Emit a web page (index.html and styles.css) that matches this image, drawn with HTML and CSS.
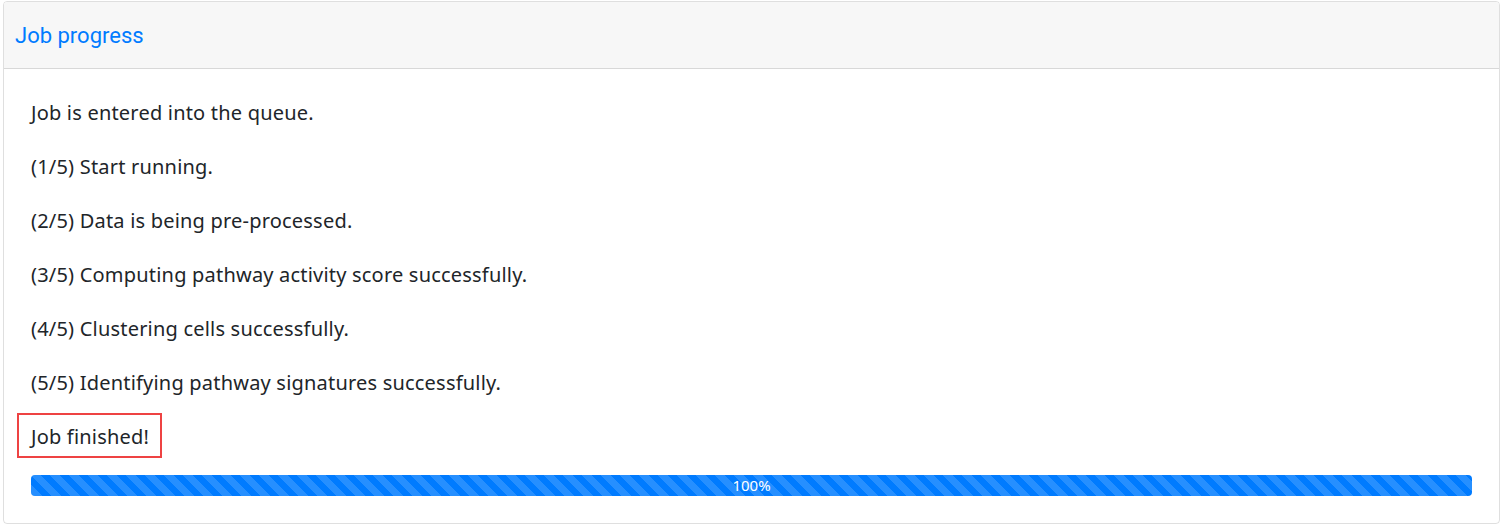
FILE: index.html
```html
<!DOCTYPE html>
<html lang="en">
<head>
    <meta charset="UTF-8">
    <title>Job progress</title>
    <link rel="stylesheet" href="styles.css">
</head>
<body>
    <div class="card">
        <div class="card-header">Job progress</div>
        <div class="card-body">
            <p>Job is entered into the queue.</p>
            <p>(1/5) Start running.</p>
            <p>(2/5) Data is being pre-processed.</p>
            <p>(3/5) Computing pathway activity score successfully.</p>
            <p>(4/5) Clustering cells successfully.</p>
            <p>(5/5) Identifying pathway signatures successfully.</p>
            <p><span class="finished">Job finished!</span></p>
            <div class="progress">
                <div class="progress-bar" style="width: 100%">100%</div>
            </div>
        </div>
    </div>
</body>
</html>
```

FILE: styles.css
```css
* {
    margin: 0;
    padding: 0;
    box-sizing: border-box;
}

body {
    margin: 1px 6px 0 3px;
    font-family: 'Noto Sans', 'Open Sans', sans-serif;
    color: #212529;
    background: #fff;
}

.card {
    border: 1px solid rgba(0,0,0,0.125);
    border-radius: 4px;
    overflow: hidden;
}

.card-header {
    height: 67px;
    padding: 0 11px;
    display: flex;
    align-items: center;
    background: #f7f7f7;
    border-bottom: 1px solid rgba(0,0,0,0.125);
    color: #007bff;
    font-family: 'Roboto', sans-serif;
    font-size: 22px;
}

.card-body {
    padding: 29px 27px 27px 27px;
}

.card-body p {
    font-size: 20px;
    line-height: 30px;
    letter-spacing: 0.2px;
    margin-bottom: 24px;
}

/* highlight box drawn over the last status line */
.finished {
    position: relative;
    display: inline-block;
}

.finished::after {
    content: '';
    position: absolute;
    top: -9px;
    bottom: -6px;
    left: -14px;
    right: -13px;
    border: 2px solid #ee4343;
}

.progress {
    height: 21px;
    margin-top: -1px;
    background: #e9ecef;
    border-radius: 4px;
    overflow: hidden;
}

.progress-bar {
    height: 100%;
    background-color: #007bff;
    background-image: linear-gradient(45deg,
        rgba(255,255,255,0.15) 25%, transparent 25%,
        transparent 50%, rgba(255,255,255,0.15) 50%,
        rgba(255,255,255,0.15) 75%, transparent 75%, transparent);
    background-size: 19px 19px;
    color: #fff;
    font-size: 15px;
    line-height: 21px;
    text-align: center;
}
```
